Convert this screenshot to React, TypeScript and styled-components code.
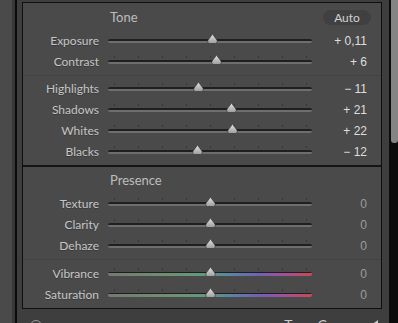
import React from "react";
import styled, { createGlobalStyle } from "styled-components";

const Global = createGlobalStyle`
  html, body {
    margin: 0;
    padding: 0;
    background: #3d3d3d;
    overflow: hidden;
  }
`;

const TRACK_W = 204;

const Frame = styled.div`
  display: flex;
  width: 398px;
  height: 323px;
  overflow: hidden;
  font-family: Lato, "Noto Sans", sans-serif;
`;

const Gutter = styled.div`
  width: 12px;
  background: #4a4a4a;
`;

const GutterShade = styled.div`
  width: 3px;
  background: #383838;
`;

const Rule = styled.div`
  width: 2px;
  background: #0b0b0b;
`;

const Column = styled.div`
  flex: 1;
  display: flex;
  flex-direction: column;
  background: #3e3e3e;
  padding: 2px 7px 0 5px;
  min-width: 0;
`;

const Panel = styled.div`
  border: 1px solid #0f0f0f;
  background: #4a4a4a;
`;

const Header = styled.div<{ $h: number }>`
  height: ${(p) => p.$h}px;
  display: flex;
  align-items: center;
  justify-content: space-between;
  padding: 0 10px 0 87px;
`;

const SectionBreak = styled.div`
  border-top: 2px solid #151515;
`;

const Title = styled.span`
  font-size: 13px;
  color: #bdbdbd;
`;

const AutoButton = styled.button`
  width: 48px;
  height: 15px;
  margin-top: 2px;
  border: none;
  border-radius: 8px;
  background: #404040;
  color: #d2d2d2;
  font-family: Lato, sans-serif;
  font-size: 12px;
  padding: 0;
  line-height: 15px;
`;

const Group = styled.div<{ $line?: string; $top?: number }>`
  border-top: ${(p) => (p.$line ? p.$line : "none")};
  padding: ${(p) => p.$top ?? 0}px 0 3px;
`;

const Row = styled.div`
  height: 21px;
  display: flex;
  align-items: center;
`;

const Label = styled.span`
  width: 77px;
  padding-right: 1px;
  box-sizing: border-box;
  text-align: right;
  font-size: 12px;
  color: #c6c6c6;
  text-shadow: 0 1px 0 rgba(0, 0, 0, 0.25);
`;

const Track = styled.div`
  position: relative;
  width: ${TRACK_W}px;
  height: 21px;
  margin-left: 8px;
`;

const Ticks = styled.div`
  position: absolute;
  left: 6px;
  top: 5px;
  width: 193px;
  height: 2px;
  background: repeating-linear-gradient(
    to right,
    #363636 0 1px,
    transparent 1px 24px
  );
`;

const Groove = styled.div<{ $color?: boolean }>`
  position: absolute;
  left: 0;
  right: 0;
  top: 9px;
  height: 4px;
  border-radius: 2px;
  background: ${(p) =>
    p.$color
      ? "linear-gradient(#1e1e1e 0 1px, transparent 1px), linear-gradient(to right, #747a72 0%, #70906f 30%, #5d9a7e 48%, #5a84a2 60%, #6e62b2 74%, #a2509c 86%, #c64a52 100%)"
      : "linear-gradient(#1f1f1f 0 2px, #6e6e6e 2px 4px)"};
`;

const Thumb = styled.svg`
  position: absolute;
  top: 4px;
  width: 11px;
  height: 10px;
`;

const Value = styled.span<{ $dim: boolean }>`
  width: 55px;
  text-align: right;
  font-family: "Liberation Sans", Arial, sans-serif;
  font-size: 12px;
  color: ${(p) => (p.$dim ? "#9c9c9c" : "#dedede")};
`;

const NextHeader = styled.div`
  display: flex;
  align-items: flex-start;
  justify-content: space-between;
  padding: 7px 4px 0 8px;
  height: 30px;
`;

const Ring = styled.span`
  width: 10px;
  height: 10px;
  margin-top: 4px;
  border: 1.5px solid #9a9a9a;
  border-radius: 50%;
`;

const NextTitle = styled.span`
  font-size: 14px;
  color: #c8c8c8;
  display: flex;
  align-items: center;
  gap: 17px;
`;

const Caret = styled.span`
  width: 0;
  height: 0;
  border-top: 5px solid transparent;
  border-bottom: 5px solid transparent;
  border-right: 7px solid #c8c8c8;
`;

const Scrollbar = styled.div`
  width: 9px;
  background: #0c0c0c;
  display: flex;
  justify-content: flex-end;
`;

const ScrollThumb = styled.div`
  width: 7px;
  height: 143px;
  background: #848484;
  border-radius: 0 0 3px 3px;
`;

type Item = { label: string; value: string; pos: number; ticks?: boolean };

function Slider({ item, color }: { item: Item; color?: boolean }) {
  const dim = item.value === "0";
  return (
    <Row>
      <Label>{item.label}</Label>
      <Track>
        {item.ticks !== false && <Ticks />}
        <Groove $color={color} />
        <Thumb viewBox="0 0 11 10" style={{ left: item.pos * TRACK_W - 5.5 }}>
          <defs>
            <linearGradient id="tg" x1="0" y1="0" x2="0" y2="1">
              <stop offset="0" stopColor="#e0e0e0" />
              <stop offset="1" stopColor="#9c9c9c" />
            </linearGradient>
          </defs>
          <path
            d="M5.5 0.6 C6.1 0.6 6.4 1.2 6.9 2 L9.9 6 C10.6 7 10.4 9.5 8.4 9.5 L2.6 9.5 C0.6 9.5 0.4 7 1.1 6 L4.1 2 C4.6 1.2 4.9 0.6 5.5 0.6 Z"
            fill="url(#tg)"
            stroke="#2e2e2e"
            strokeWidth="0.6"
          />
        </Thumb>
      </Track>
      <Value $dim={dim}>{item.value}</Value>
    </Row>
  );
}

const toneA: Item[] = [
  { label: "Exposure", value: "+ 0,11", pos: 0.511, ticks: false },
  { label: "Contrast", value: "+ 6", pos: 0.53 },
];
const toneB: Item[] = [
  { label: "Highlights", value: "\u2212 11", pos: 0.445 },
  { label: "Shadows", value: "+ 21", pos: 0.603 },
  { label: "Whites", value: "+ 22", pos: 0.608 },
  { label: "Blacks", value: "\u2212 12", pos: 0.441 },
];
const presA: Item[] = [
  { label: "Texture", value: "0", pos: 0.5 },
  { label: "Clarity", value: "0", pos: 0.5 },
  { label: "Dehaze", value: "0", pos: 0.5 },
];
const presB: Item[] = [
  { label: "Vibrance", value: "0", pos: 0.5 },
  { label: "Saturation", value: "0", pos: 0.5 },
];

export default function App() {
  return (
    <>
      <Global />
      <Frame>
        <Gutter />
        <GutterShade />
        <Rule />
        <Column>
          <Panel>
            <Header $h={27}>
              <Title>Tone</Title>
              <AutoButton>Auto</AutoButton>
            </Header>
            <Group>
              {toneA.map((it) => (
                <Slider key={it.label} item={it} />
              ))}
            </Group>
            <Group $line="1px solid #424242" $top={2}>
              {toneB.map((it) => (
                <Slider key={it.label} item={it} />
              ))}
            </Group>
            <SectionBreak>
              <Header $h={26}>
                <Title>Presence</Title>
              </Header>
            </SectionBreak>
            <Group>
              {presA.map((it) => (
                <Slider key={it.label} item={it} />
              ))}
            </Group>
            <Group $line="1px solid #424242" $top={3}>
              {presB.map((it) => (
                <Slider key={it.label} item={it} color />
              ))}
            </Group>
          </Panel>
          <NextHeader>
            <Ring />
            <NextTitle>
              <span>Tone Curve</span>
              <Caret />
            </NextTitle>
          </NextHeader>
        </Column>
        <Scrollbar>
          <ScrollThumb />
        </Scrollbar>
      </Frame>
    </>
  );
}
